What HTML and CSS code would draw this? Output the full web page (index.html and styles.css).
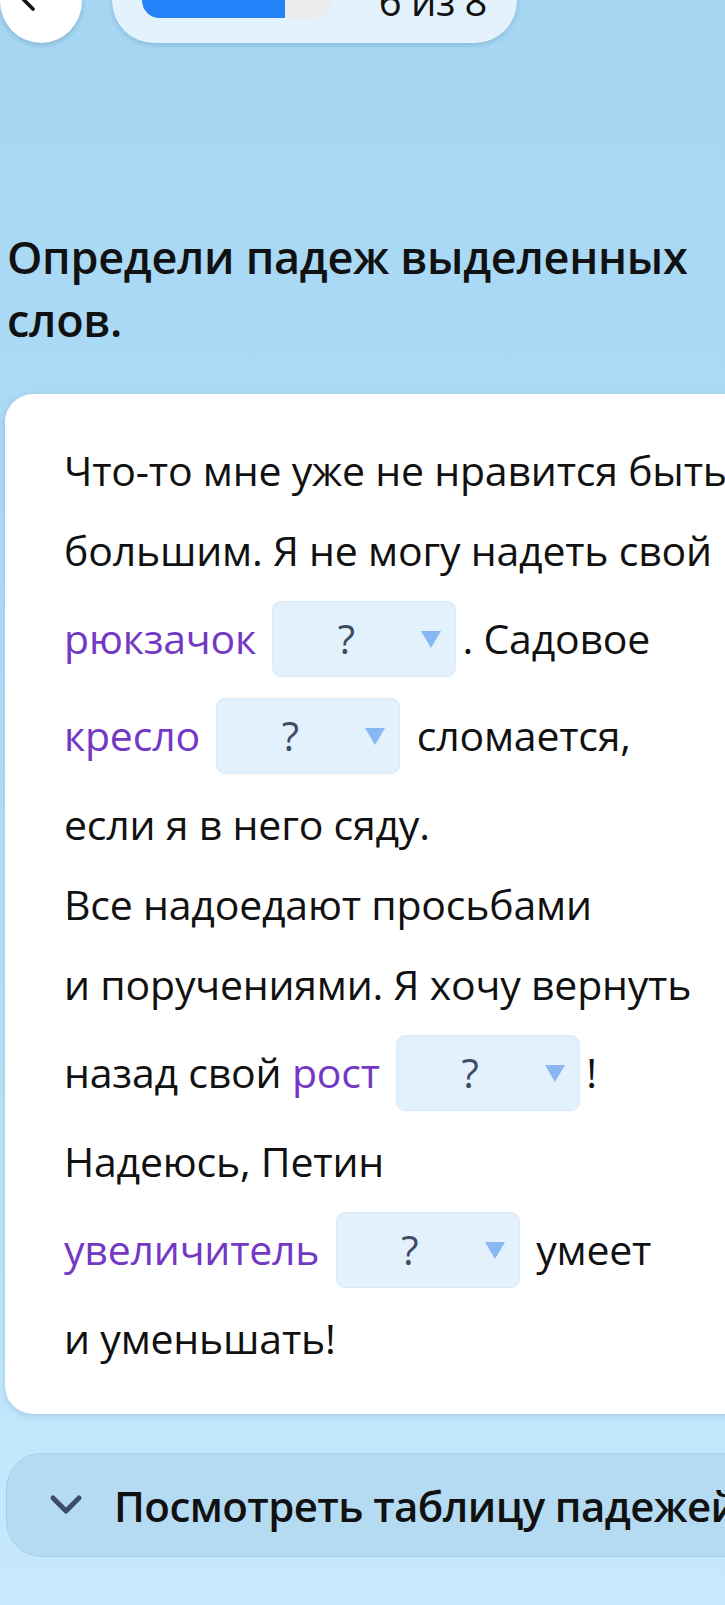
FILE: index.html
```html
<!DOCTYPE html>
<html lang="ru">
<head>
<meta charset="utf-8">
<title>Определи падеж</title>
<link rel="stylesheet" href="styles.css">
</head>
<body>
<div class="page">
  <header class="topbar">
    <button class="back" aria-label="Назад">
      <svg class="back-icon" viewBox="0 0 48 40" width="48" height="40">
        <path d="M44 20H7M21 6L7 20L21 34" fill="none" stroke="#111" stroke-width="3.6" stroke-linecap="round" stroke-linejoin="round"/>
      </svg>
    </button>
    <div class="progress-pill">
      <div class="track"><div class="fill" style="width:75%"></div></div>
      <span class="count">6 из 8</span>
    </div>
  </header>

  <h1 class="title">Определи падеж выделенных<br>слов.</h1>

  <section class="card">
    <p class="story">Что-то мне уже не нравится быть<br>большим. Я не могу надеть свой<br><span class="hl">рюкзачок</span> <span class="select"><span class="q">?</span><span class="tri"></span></span>. Садовое<br><span class="hl">кресло</span> <span class="select"><span class="q">?</span><span class="tri"></span></span> сломается,<br>если я в него сяду.<br>Все надоедают просьбами<br>и поручениями. Я хочу вернуть<br>назад свой <span class="hl">рост</span> <span class="select"><span class="q">?</span><span class="tri"></span></span>!<br>Надеюсь, Петин<br><span class="hl">увеличитель</span> <span class="select"><span class="q">?</span><span class="tri"></span></span> умеет<br>и уменьшать!</p>
  </section>

  <button class="cases-toggle">
    <svg class="chev" viewBox="0 0 34 22" width="34" height="22">
      <path d="M4 4L17 17L30 4" fill="none" stroke="#3c4c69" stroke-width="5" stroke-linecap="round" stroke-linejoin="round"/>
    </svg>
    <span class="cases-label">Посмотреть таблицу падежей</span>
  </button>
</div>
</body>
</html>
```

FILE: styles.css
```css
html, body {
  margin: 0;
  padding: 0;
}
body {
  width: 725px;
  min-height: 1605px;
  overflow: hidden;
  background: linear-gradient(180deg, #a5d6f2 0%, #acdbf6 30%, #bde3fa 75%, #c6e9fc 100%);
  font-family: "Open Sans", "Noto Sans", sans-serif;
  color: #111;
}
.page {
  display: flex;
  flex-direction: column;
  align-items: flex-start;
}
.topbar {
  display: flex;
  align-items: center;
  gap: 30px;
  height: 84px;
  margin-top: -41px;
}
.back {
  flex: none;
  width: 82px;
  height: 84px;
  border-radius: 50%;
  border: none;
  background: #fff;
  box-shadow: 0 2px 5px rgba(30, 80, 130, 0.25);
  display: flex;
  align-items: center;
  justify-content: center;
  padding: 0;
}
.back-icon {
  margin-top: -12px;
  margin-left: -10px;
}
.progress-pill {
  flex: none;
  display: flex;
  align-items: center;
  justify-content: space-between;
  width: 405px;
  height: 84px;
  box-sizing: border-box;
  padding: 0 30px;
  border-radius: 42px;
  background: #e3f2fc;
  box-shadow: 0 2px 5px rgba(30, 80, 130, 0.22);
}
.track {
  flex: none;
  width: 190px;
  height: 34px;
  border-radius: 17px;
  background: #ececec;
  overflow: hidden;
}
.fill {
  height: 100%;
  background: #2382f7;
  border-radius: 17px 0 0 17px;
}
.count {
  font-size: 40px;
  line-height: 1;
  letter-spacing: -0.5px;
  color: #111;
  white-space: nowrap;
  margin-top: 0;
}
.title {
  margin: 182px 0 0 7px;
  font-size: 45px;
  line-height: 63px;
  font-weight: 600;
  letter-spacing: -0.3px;
  color: #111;
}
.card {
  margin: 43px 0 0 5px;
  width: 780px;
  box-sizing: border-box;
  padding: 36px 20px 36px 59px;
  background: #fff;
  border-radius: 28px;
  box-shadow: 0 2px 6px rgba(30, 80, 130, 0.18);
}
.story {
  margin: 0;
  font-size: 41px;
  line-height: 80px;
  letter-spacing: -0.2px;
  white-space: nowrap;
  color: #111;
}
.hl {
  color: #7338c4;
}
.select {
  display: inline-flex;
  align-items: center;
  width: 184px;
  height: 76px;
  box-sizing: border-box;
  margin: 11px 6px 10px;
  padding: 0 14px 0 59px;
  border-radius: 9px;
  background: #e3f1fd;
  border: 1px solid #d9e9f8;
  line-height: 1;
  letter-spacing: 0;
}
.q {
  font-size: 40px;
  color: #3d4b63;
  width: 28px;
  text-align: center;
}
.tri {
  margin-left: auto;
  width: 0;
  height: 0;
  border-left: 10px solid transparent;
  border-right: 10px solid transparent;
  border-top: 17px solid #88b7f3;
}
.cases-toggle {
  margin: 39px 0 0 6px;
  width: 780px;
  height: 104px;
  box-sizing: border-box;
  display: flex;
  align-items: center;
  gap: 31px;
  padding: 0 0 0 42px;
  border-radius: 36px;
  background: #b5dbf3;
  border: 1.5px solid #a7cde8;
  font-family: "Open Sans", "Noto Sans", sans-serif;
  cursor: pointer;
}
.chev {
  flex: none;
}
.cases-label {
  font-size: 42px;
  font-weight: 600;
  letter-spacing: -0.6px;
  color: #111;
  white-space: nowrap;
}
```
